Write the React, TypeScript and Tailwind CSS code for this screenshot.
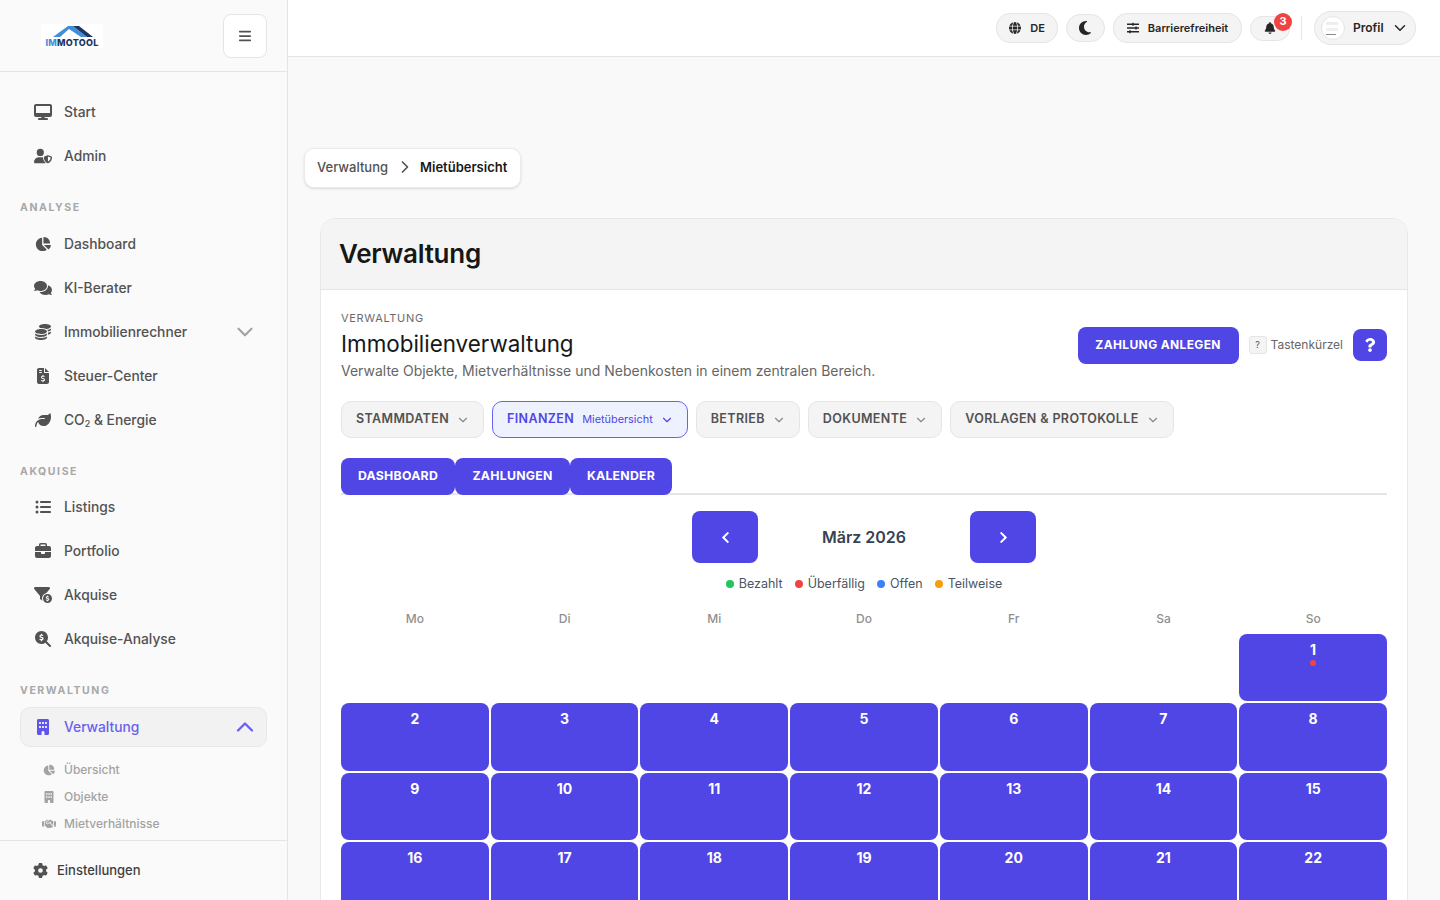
import { ReactNode } from 'react';
import { FaComments, FaSlidersH, FaChevronLeft, FaChevronRight, FaQuestion } from 'react-icons/fa';
import {
  FaDesktop,
  FaUserShield,
  FaChartPie,
  FaCoins,
  FaFileInvoiceDollar,
  FaLeaf,
  FaListUl,
  FaBriefcase,
  FaFilterCircleDollar,
  FaMagnifyingGlassDollar,
  FaBuilding,
  FaHandshake,
  FaGear,
  FaGlobe,
  FaMoon,
  FaBell,
  FaBars,
} from 'react-icons/fa6';
import { ChevronDown, ChevronUp, ChevronRight } from 'lucide-react';

function Logo() {
  return (
    <div className="w-[62px] h-6 bg-white flex flex-col items-center overflow-hidden">
      <svg width="62" height="14" viewBox="0 0 62 14" className="shrink-0">
        <path d="M12 13 L27 2 L32 2 L46 13 L40 13 L28 5 L19 13 Z" fill="#3f8fd8" />
        <path d="M32 2 L38 2 L52 13 L46 13 Z" fill="#1c3563" />
      </svg>
      <div className="text-[9px] leading-[10px] font-extrabold tracking-[0.03em] text-[#1c3563]">
        <span className="text-[#3f8fd8]">IM</span>MOTOOL
      </div>
    </div>
  );
}

function NavItem({ icon, label, chevron }: { icon: ReactNode; label: ReactNode; chevron?: boolean }) {
  return (
    <div className="h-11 flex items-center pl-[14px] pr-[9px] text-[13.8px] font-medium text-[#525252]">
      <span className="w-[18px] flex justify-center text-[#525252] text-[16px]">{icon}</span>
      <span className="ml-3 flex-1">{label}</span>
      {chevron && <ChevronDown className="w-[26px] h-[26px] text-[#a3a3a3]" />}
    </div>
  );
}

function SectionLabel({ children, className }: { children: ReactNode; className: string }) {
  return (
    <div className={`text-[10.5px] leading-4 font-bold tracking-[0.15em] text-[#a8a8a8] ${className}`}>{children}</div>
  );
}

function SubItem({ icon, label }: { icon: ReactNode; label: string }) {
  return (
    <div className="h-[27px] flex items-center text-xs font-medium text-[#a3a3a3] pl-5">
      <span className="w-[18px] flex justify-center text-[12px]">{icon}</span>
      <span className="ml-[6px]">{label}</span>
    </div>
  );
}

function Sidebar() {
  return (
    <aside className="w-[288px] h-screen shrink-0 bg-[#fafafa] border-r border-[#e5e5e5] flex flex-col">
      <div className="h-[72px] shrink-0 border-b border-[#e5e5e5] flex items-center justify-between pl-[41px] pr-5">
        <Logo />
        <button className="w-11 h-11 bg-white border border-[#e5e5e5] rounded-lg flex items-center justify-center text-[#525252] text-[14px]">
          <FaBars />
        </button>
      </div>
      <nav className="flex-1 overflow-hidden px-5 pt-[18px]">
        <NavItem icon={<FaDesktop className="text-[18px]" />} label="Start" />
        <NavItem icon={<FaUserShield className="text-[18px]" />} label="Admin" />
        <SectionLabel className="mt-[22px] mb-[6px]">ANALYSE</SectionLabel>
        <NavItem icon={<FaChartPie />} label="Dashboard" />
        <NavItem icon={<FaComments className="text-[18px]" />} label="KI-Berater" />
        <NavItem icon={<FaCoins />} label="Immobilienrechner" chevron />
        <NavItem icon={<FaFileInvoiceDollar />} label="Steuer-Center" />
        <NavItem
          icon={<FaLeaf />}
          label={
            <>
              CO<sub className="text-[9px]">2</sub> &amp; Energie
            </>
          }
        />
        <SectionLabel className="mt-[22px] mb-[5px]">AKQUISE</SectionLabel>
        <NavItem icon={<FaListUl />} label="Listings" />
        <NavItem icon={<FaBriefcase />} label="Portfolio" />
        <NavItem icon={<FaFilterCircleDollar className="text-[18px]" />} label="Akquise" />
        <NavItem icon={<FaMagnifyingGlassDollar />} label="Akquise-Analyse" />
        <SectionLabel className="mt-[22px] mb-[8px]">VERWALTUNG</SectionLabel>
        <div className="h-10 flex items-center pl-[13px] pr-[7px] text-[13.8px] font-medium text-[#6a5ff0] bg-[#f2f2f2] border border-[#e8e8e8] rounded-[10px]">
          <span className="w-[18px] flex justify-center text-[16px] text-[#5f55ee]">
            <FaBuilding />
          </span>
          <span className="ml-3 flex-1">Verwaltung</span>
          <ChevronUp className="w-7 h-7 text-[#6a5ff0]" />
        </div>
        <div className="mt-[9px]">
          <SubItem icon={<FaChartPie />} label="Übersicht" />
          <SubItem icon={<FaBuilding />} label="Objekte" />
          <SubItem icon={<FaHandshake className="text-[14px]" />} label="Mietverhältnisse" />
        </div>
      </nav>
      <div className="h-[60px] shrink-0 border-t border-[#e5e5e5] flex items-center pl-[33px] text-[13px] font-medium text-[#404040]">
        <FaGear className="text-[15px] text-[#525252]" />
        <span className="ml-[9px]">Einstellungen</span>
      </div>
    </aside>
  );
}

function Chip({ children, className }: { children: ReactNode; className: string }) {
  return (
    <div
      className={`flex items-center justify-center bg-[#f4f4f4] border border-[#e5e5e5] rounded-[14px] text-[#262626] ${className}`}
    >
      {children}
    </div>
  );
}

function Topbar() {
  return (
    <header className="h-[57px] shrink-0 bg-white border-b border-[#e5e5e5] flex items-center justify-end pr-6">
      <Chip className="w-[62px] h-[30px] gap-[9px] text-[11px] font-semibold">
        <FaGlobe className="text-[12px]" />
        <span>DE</span>
      </Chip>
      <Chip className="w-[39px] h-7 ml-2 text-[16px]">
        <FaMoon className="-ml-[2px]" />
      </Chip>
      <Chip className="w-[129px] h-[30px] ml-2 gap-[9px] text-[11px] font-semibold">
        <FaSlidersH className="text-[12px]" />
        <span>Barrierefreiheit</span>
      </Chip>
      <div className="relative ml-2">
        <Chip className="w-10 h-[25px] text-[12px]">
          <FaBell />
        </Chip>
        <span className="absolute -top-[3px] -right-[2px] w-[18px] h-[18px] rounded-full bg-[#ef4444] text-white text-[11px] font-bold flex items-center justify-center">
          3
        </span>
      </div>
      <div className="w-px h-6 bg-[#e5e5e5] ml-[11px] mr-3" />
      <Chip className="w-[102px] h-[34px] rounded-[17px] justify-start pl-[6px] text-xs font-semibold">
        <span className="w-6 h-6 rounded-full bg-white border border-[#e5e5e5] flex flex-col justify-center gap-[3px] pl-1 pr-[6px]">
          <span className="h-[3px] bg-[#eeeeee]" />
          <span className="h-[3px] bg-[#f0f0f0]" />
          <span className="h-px w-[10px] bg-[#8a8a8a]" />
        </span>
        <span className="ml-2">Profil</span>
        <ChevronDown className="w-[18px] h-[18px] ml-[7px]" />
      </Chip>
    </header>
  );
}

function GroupButton({ label, sub, active }: { label: string; sub?: string; active?: boolean }) {
  return (
    <button
      className={`h-[37px] pl-[14px] pr-[13px] rounded-[10px] border flex items-center text-[12.5px] font-semibold tracking-[0.03em] ${
        active ? 'bg-[#eef2ff] border-[#6a63f0] text-[#4f46e5]' : 'bg-[#f4f4f4] border-[#e5e5e5] text-[#525252]'
      }`}
    >
      {label}
      {sub && <span className="ml-2 text-[10.9px] font-normal tracking-normal">{sub}</span>}
      <ChevronDown className={`w-[14px] h-[14px] ml-[7px] ${active ? 'text-[#4f46e5]' : 'text-[#8a8a8a]'}`} />
    </button>
  );
}

function Tab({ label, className }: { label: string; className: string }) {
  return (
    <button
      className={`h-[37px] -mb-[2px] bg-[#4f46e5] rounded-lg text-white text-[12.3px] font-bold tracking-[0.02em] flex items-center justify-center ${className}`}
    >
      {label}
    </button>
  );
}

function LegendDot({ color, label }: { color: string; label: string }) {
  return (
    <span className="flex items-center gap-[5px]">
      <span className={`w-2 h-2 rounded-full ${color}`} />
      {label}
    </span>
  );
}

function Calendar() {
  const days = ['Mo', 'Di', 'Mi', 'Do', 'Fr', 'Sa', 'So'];
  // only the rows that fit in the viewport
  const numbers = Array.from({ length: 22 }, (_, i) => i + 1);

  return (
    <div>
      <div className="flex items-center justify-center mt-4">
        <button className="w-[66px] h-[52px] bg-[#4f46e5] rounded-lg flex items-center justify-center text-white text-[13px]">
          <FaChevronLeft />
        </button>
        <div className="w-[212px] text-center text-base font-semibold text-[#374151]">März 2026</div>
        <button className="w-[66px] h-[52px] bg-[#4f46e5] rounded-lg flex items-center justify-center text-white text-[13px]">
          <FaChevronRight />
        </button>
      </div>
      <div className="flex justify-center gap-3 mt-3 text-[12.5px] leading-[18px] text-[#4b5563]">
        <LegendDot color="bg-[#22c55e]" label="Bezahlt" />
        <LegendDot color="bg-[#ef4444]" label="Überfällig" />
        <LegendDot color="bg-[#3b82f6]" label="Offen" />
        <LegendDot color="bg-[#f59e0b]" label="Teilweise" />
      </div>
      <div className="grid grid-cols-7 gap-x-[2px] mt-[18px] mb-[7px]">
        {days.map((d) => (
          <div key={d} className="text-center text-xs leading-4 font-medium text-[#8f8f8f]">
            {d}
          </div>
        ))}
      </div>
      <div className="grid grid-cols-7 gap-[2px]">
        {Array.from({ length: 6 }, (_, i) => (
          <div key={i} />
        ))}
        {numbers.map((n) => (
          <div key={n} className="h-[67.4px] bg-[#4f46e5] rounded-lg pt-[6px] flex flex-col items-center text-white text-sm font-bold leading-5">
            {n}
            {n === 1 && <span className="w-[6px] h-[6px] rounded-full bg-[#ef4444]" />}
          </div>
        ))}
      </div>
    </div>
  );
}

export default function App() {
  return (
    <div className="h-screen overflow-hidden flex bg-[#f9f9f9] font-[Inter,sans-serif]">
      <Sidebar />
      <main className="flex-1 min-w-0 flex flex-col">
        <Topbar />
        <div className="flex-1 overflow-hidden pl-4 pr-8 pt-[91px]">
          <div className="inline-flex items-center h-10 pl-3 pr-[13px] bg-white border border-[#ebebeb] rounded-[10px] shadow-sm text-[13px]">
            <span className="font-medium text-[#525252]">Verwaltung</span>
            <ChevronRight className="w-5 h-5 ml-[7px] mr-[5px] -mt-[2px] text-[#525252]" />
            <span className="font-semibold text-[#171717]">Mietübersicht</span>
          </div>
          <section className="ml-4 mt-[30px] bg-white border border-[#e8e8e8] rounded-t-2xl">
            <div className="h-[71px] pb-[2px] bg-[#f4f4f4] rounded-t-2xl border-b border-[#e5e5e5] flex items-center pl-[18px]">
              <h1 className="text-[26px] font-semibold text-[#171717] tracking-[-0.01em]">Verwaltung</h1>
            </div>
            <div className="px-5 pt-[22px]">
              <div className="flex items-center justify-between">
                <div>
                  <div className="text-[11px] leading-3 tracking-[0.062em] text-[#6b6b6b]">VERWALTUNG</div>
                  <h2 className="mt-[5px] text-[22.4px] leading-[30px] text-[#171717]">Immobilienverwaltung</h2>
                  <p className="mt-[2px] text-sm leading-5 text-[#666666]">
                    Verwalte Objekte, Mietverhältnisse und Nebenkosten in einem zentralen Bereich.
                  </p>
                </div>
                <div className="flex items-center mt-[-3px]">
                  <button className="w-[161px] h-[37px] bg-[#4f46e5] rounded-lg text-white text-xs font-bold tracking-[0.03em]">
                    ZAHLUNG ANLEGEN
                  </button>
                  <span className="ml-[10px] w-[18px] h-[18px] bg-[#f4f4f4] border border-[#e5e5e5] rounded-[3px] text-[9px] text-[#525252] flex items-center justify-center">
                    ?
                  </span>
                  <span className="ml-1 text-xs text-[#666666]">Tastenkürzel</span>
                  <button className="ml-[10px] w-[34px] h-8 bg-[#4f46e5] rounded-lg text-white text-[14px] flex items-center justify-center">
                    <FaQuestion />
                  </button>
                </div>
              </div>
              <div className="flex gap-2 mt-5">
                <GroupButton label="STAMMDATEN" />
                <GroupButton label="FINANZEN" sub="Mietübersicht" active />
                <GroupButton label="BETRIEB" />
                <GroupButton label="DOKUMENTE" />
                <GroupButton label="VORLAGEN & PROTOKOLLE" />
              </div>
              <div className="flex mt-5 border-b-2 border-[#e5e5e5]">
                <Tab label="DASHBOARD" className="w-[114px]" />
                <Tab label="ZAHLUNGEN" className="w-[115px]" />
                <Tab label="KALENDER" className="w-[102px]" />
              </div>
              <Calendar />
            </div>
          </section>
        </div>
      </main>
    </div>
  );
}
